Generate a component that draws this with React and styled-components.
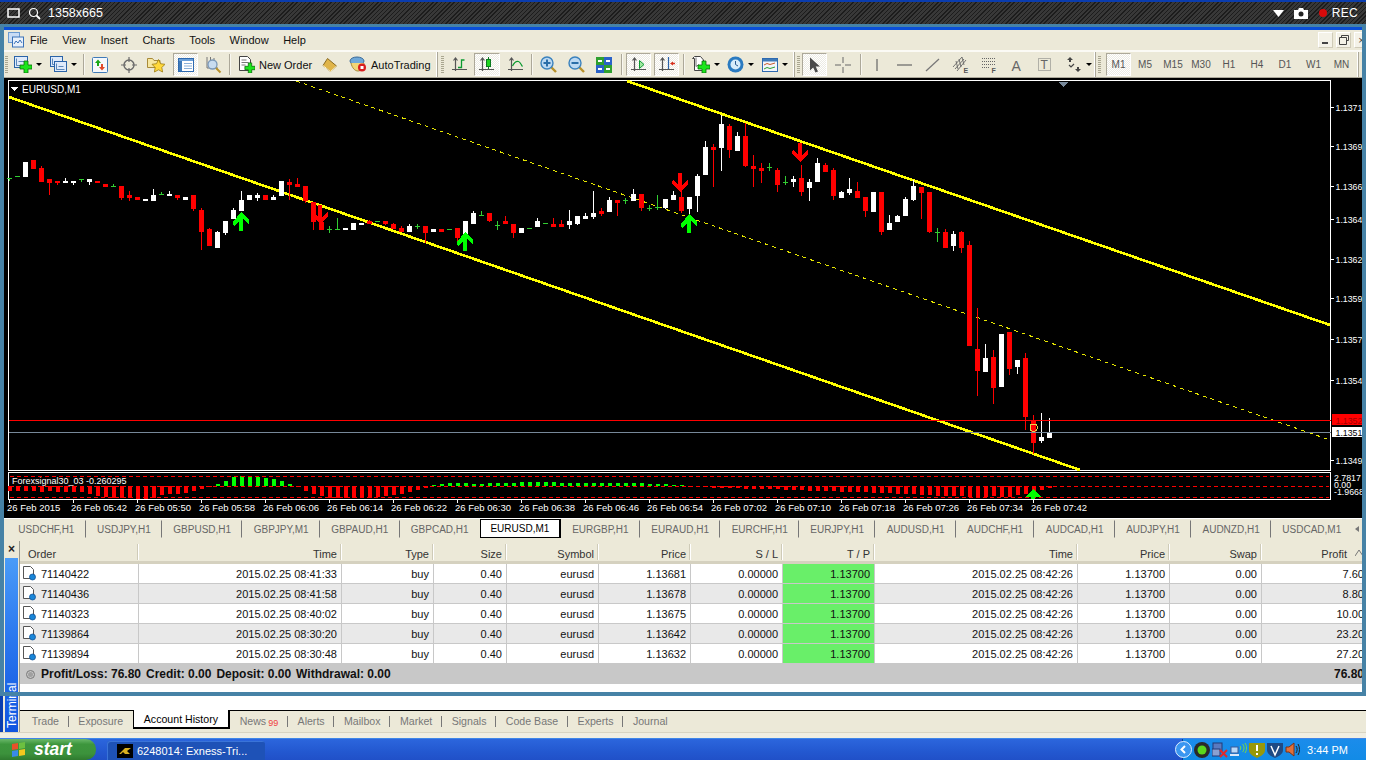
import React from 'react';
import styled, { createGlobalStyle } from 'styled-components';

const GlobalStyle = createGlobalStyle`
  html, body {
    margin: 0;
    background: #fff;
    overflow: hidden;
  }
  body {
    font-family: "Liberation Sans", Arial, sans-serif;
    font-size: 11px;
  }
`;

const Page = styled.div`
  position: relative;
  width: 1366px;
  height: 760px;
  display: flex;
  flex-direction: column;
  overflow: hidden;
`;

/* recorder overlay */
const RecBar = styled.div`
  height: 22px;
  border-top: 2px solid #0a3cae;
  background: repeating-linear-gradient(135deg, #1c1c1c 0 1px, #383838 1px 3px);
  color: #fff;
  display: flex;
  align-items: center;
  gap: 0;
  padding: 0 8px 0 7px;
  font-size: 12.5px;
  flex: none;
`;

const RecGap = styled.span`
  width: ${p => p.$w}px;
`;

const RecSize = styled.span`
  margin-left: 7px;
  flex: 1;
`;

const RecLabel = styled.span`
  margin-left: 5px;
  font-size: 12px;
  letter-spacing: 0.3px;
`;

const RecFrame = styled.div`
  position: absolute;
  left: 0;
  top: 24px;
  width: 1366px;
  height: 672px;
  box-sizing: border-box;
  border: 4px solid #4682a6;
  border-top-width: 3px;
  pointer-events: none;
`;

const Desktop = styled.div`
  flex: 1;
  min-height: 0;
  display: flex;
  flex-direction: column;
  padding: 3px 0 0 4px;
  background: #ece9d8;
  box-shadow: inset 3px 0 0 #0a3fb0;
`;

const TitleStrip = styled.div`
  height: 3px;
  background: #0a4fd8;
  flex: none;
`;

const MenuBar = styled.div`
  height: 20px;
  display: flex;
  align-items: center;
  gap: 14.5px;
  padding-left: 4px;
  color: #111;
  font-size: 11px;
  border-bottom: 2px solid #fbfaf5;
  flex: none;
`;

const AppIcon = styled.span`
  display: flex;
  width: 16px;
  margin-right: -8.5px;
`;

const WinButtons = styled.div`
  margin-left: auto;
  display: flex;
  gap: 3px;
  margin-right: -3px;
`;

const WinButton = styled.span`
  width: 15px;
  height: 16px;
  box-sizing: border-box;
  display: flex;
  align-items: center;
  justify-content: center;
  background: #f4f2e8;
  border: 1px solid #fff;
  border-right-color: #cfcbb8;
  border-bottom-color: #cfcbb8;
  color: #444;
`;

const Toolbar = styled.div`
  height: 25px;
  display: flex;
  align-items: center;
  border-bottom: 1px solid #aca899;
  box-sizing: content-box;
  flex: none;
`;

const Tool = styled.div`
  flex: none;
  margin-left: ${p => p.$ml}px;
  width: ${p => p.$w}px;
  height: ${p => (p.$pressed ? 23 : 18)}px;
  box-sizing: border-box;
  display: flex;
  align-items: center;
  justify-content: ${p => (p.$label ? 'flex-start' : 'center')};
  gap: ${p => (p.$label ? 4 : 2)}px;
  color: #111;
  white-space: nowrap;
  ${p =>
    p.$pressed &&
    `
    background: repeating-conic-gradient(#ffffff 0 25%, #ecebe3 0 50%) 0 0 / 2px 2px;
    border: 1px solid;
    border-color: #aca899 #fff #fff #aca899;
  `}
`;

const Caret = styled.span`
  width: 0;
  height: 0;
  margin-left: 2px;
  border-left: 3px solid transparent;
  border-right: 3px solid transparent;
  border-top: 3px solid #000;
`;

const Separator = styled.span`
  flex: none;
  margin-left: ${p => p.$ml}px;
  width: 1px;
  height: 21px;
  background: #aca899;
  box-shadow: 1px 0 0 #f8f7f0;
  margin-right: 1px;
`;

const BarEnd = styled.span`
  flex: none;
  margin-left: ${p => p.$ml}px;
  width: 2px;
  height: 25px;
  border-left: 1px solid #fff;
  border-right: 1px solid #aca899;
  box-sizing: border-box;
`;

const Grip = styled.span`
  flex: none;
  margin-left: ${p => p.$ml}px;
  width: 3px;
  height: 17px;
  background: repeating-linear-gradient(180deg, #a9a690 0 1px, transparent 1px 2px);
`;

const Period = styled.div`
  flex: none;
  width: ${p => p.$w}px;
  height: ${p => (p.$pressed ? 23 : 18)}px;
  margin-left: ${p => p.$ml || 0}px;
  box-sizing: border-box;
  display: flex;
  align-items: center;
  justify-content: center;
  font-size: 10px;
  color: #555;
  ${p =>
    p.$pressed &&
    `
    background: repeating-conic-gradient(#ffffff 0 25%, #ecebe3 0 50%) 0 0 / 2px 2px;
    border: 1px solid;
    border-color: #aca899 #fff #fff #aca899;
  `}
`;

const ChartSvg = styled.svg`
  display: block;
  flex: none;
  width: 1358px;
  height: 440px;
  background: #000;
`;

const SymbolBar = styled.div`
  height: 23px;
  display: flex;
  align-items: flex-start;
  padding: 1px 0 0 3px;
  box-sizing: border-box;
  border-top: 1px solid #fff;
  flex: none;
`;

const SymbolTab = styled.div`
  padding: 0 ${p => (p.$active ? 9.5 : 10.3)}px;
  display: flex;
  align-items: center;
  font-size: 10px;
  white-space: nowrap;
  box-sizing: border-box;
  color: ${p => (p.$active ? '#000' : '#666')};
  background: ${p => (p.$active ? '#fff' : 'transparent')};
  border-left: 1px solid ${p => (p.$active ? '#000' : 'transparent')};
  border-top: 1px solid ${p => (p.$active ? '#000' : 'transparent')};
  border-right: ${p => (p.$active ? '2px solid #000' : p.$sep ? '1px solid #777' : '1px solid transparent')};
  border-bottom: 1px solid ${p => (p.$active ? '#000' : 'transparent')};
  margin-top: ${p => (p.$active ? -1 : 0)}px;
  height: ${p => (p.$active ? 19 : 18)}px;
`;

const ScrollArrow = styled.span`
  margin-left: 2px;
  margin-top: 6px;
  width: 0;
  height: 0;
  border-top: 3px solid transparent;
  border-bottom: 3px solid transparent;
  border-right: 4px solid #777;
`;

const Terminal = styled.div`
  flex: 1;
  min-height: 0;
  display: flex;
`;

const SideBar = styled.div`
  width: 15px;
  flex: none;
  display: flex;
  flex-direction: column;
`;

const SideClose = styled.div`
  height: 16px;
  padding-top: 1px;
  display: flex;
  justify-content: center;
  font-size: 12px;
  font-weight: bold;
  color: #222;
  line-height: 14px;
`;

const SideTitle = styled.div`
  flex: 1;
  margin-left: 1px;
  width: 13px;
  background: linear-gradient(0deg, #4a9cf8 0%, #2f7cf0 40%, #0f55e0 100%);
  color: #fff;
  display: flex;
  align-items: center;
  justify-content: flex-start;
  writing-mode: vertical-rl;
  transform: rotate(180deg);
  font-size: 12px;
  padding-top: 4px;
  box-sizing: border-box;
`;

const TerminalMain = styled.div`
  flex: 1;
  min-width: 0;
  display: flex;
  flex-direction: column;
  padding-top: 2px;
  border-left: 1px solid #9a9a90;
`;

const columns = '119px 203px 92px 73px 92px 92px 92px 92px 203px 92px 92px 1fr';

const HeadRow = styled.div`
  display: grid;
  grid-template-columns: ${columns};
  height: 18px;
  border-bottom: 3px solid #d5d1bf;
  box-sizing: content-box;
  background: #ece9d8;
  color: #333;
  flex: none;
`;

const HeadCell = styled.div`
  position: relative;
  display: flex;
  align-items: center;
  justify-content: ${p => (p.$left ? 'flex-start' : 'flex-end')};
  padding: ${p => (p.$left ? '3px 0 0 8px' : p.$end ? '3px 19px 0 0' : '3px 4px 0 0')};
  border-right: ${p => (p.$end ? 0 : '1px solid #fff')};
  box-shadow: ${p => (p.$end ? 'none' : 'inset -1px 0 0 #cfcbb8')};
  margin: 1px 0;
`;

const SortMark = styled.svg`
  position: absolute;
  right: 3px;
  top: 5px;
  width: 8px;
  height: 8px;
`;

const DataRow = styled.div`
  display: grid;
  grid-template-columns: ${columns};
  height: 20px;
  box-sizing: border-box;
  border-bottom: 1px solid #c8c8c8;
  background: ${p => (p.$odd ? '#e9e9e9' : '#fff')};
  color: #111;
  flex: none;
`;

const DataCell = styled.div`
  display: flex;
  align-items: center;
  justify-content: flex-end;
  padding-right: ${p => (p.$end ? 2 : 4)}px;
  border-right: ${p => (p.$end ? 0 : '1px solid #c8c8c8')};
  white-space: nowrap;
  background: ${p => (p.$hit ? '#69ef69' : 'transparent')};
`;

const OrderCell = styled(DataCell)`
  justify-content: flex-start;
  padding-left: 3px;
  gap: 5px;
`;

const TotalRow = styled.div`
  height: 20px;
  background: #c8c8c8;
  display: flex;
  align-items: center;
  padding: 0 2px 0 6px;
  font-weight: bold;
  font-size: 12px;
  color: #111;
  flex: none;
`;

const TotalDot = styled.span`
  width: 7px;
  height: 7px;
  border-radius: 50%;
  background: #a0a0a0;
  border: 1px solid #808080;
  box-shadow: inset 0 0 0 1px #c8c8c8;
  margin-right: 6px;
`;

const TotalItem = styled.span`
  margin-right: 5px;
`;

const TotalSum = styled.span`
  margin-left: auto;
`;

const TermFiller = styled.div`
  flex: 1;
  background: #fff;
`;

const TermTabs = styled.div`
  height: 22px;
  flex: none;
  display: flex;
  align-items: flex-start;
  border-top: 1px solid #000;
  box-sizing: border-box;
  padding-left: 1px;
`;

const TermTab = styled.div`
  position: relative;
  height: ${p => (p.$active ? 16 : 20)}px;
  padding: 0 ${p => (p.$active ? 10 : 9.7)}px;
  margin-left: ${p => (p.$first ? 1 : 0)}px;
  display: flex;
  align-items: center;
  gap: 2px;
  white-space: nowrap;
  color: ${p => (p.$active ? '#000' : '#777')};
  background: ${p => (p.$active ? '#fff' : 'transparent')};
  font-size: 10.6px;
  box-sizing: content-box;
  ${p =>
    p.$active
      ? `border-left: 1px solid #000; border-right: 2px solid #000; border-bottom: 2px solid #000; margin-top: -1px; padding-top: 1px;`
      : p.$sep
        ? `&::after { content: ''; position: absolute; right: 0; top: 5px; height: 11px; width: 1px; background: #777; }`
        : ''}
`;

const NewsCount = styled.span`
  color: #f04040;
  font-size: 9px;
  margin-top: 3px;
`;

const BottomStrip = styled.div`
  height: 5px;
  flex: none;
  border-top: 1px solid #d8d4c2;
  background: #f0eee2;
  margin-left: -4px;
`;

const Taskbar = styled.div`
  height: 22px;
  flex: none;
  display: flex;
  align-items: flex-end;
  background: linear-gradient(180deg, #2c66dd 0%, #2358d0 60%, #2050c8 100%);
  border-top: 1px solid #3f86e8;
  box-sizing: border-box;
`;

const StartButton = styled.div`
  width: 96px;
  height: 21px;
  display: flex;
  align-items: center;
  padding-left: 11px;
  gap: 7px;
  box-sizing: border-box;
  border-radius: 0 10px 10px 0;
  background: linear-gradient(180deg, #6ab86a 0%, #3d963d 25%, #3c923c 70%, #2f7a2f 100%);
  color: #fff;
  font-style: italic;
  font-weight: bold;
  font-size: 17.5px;
`;

const TaskButton = styled.div`
  margin-left: 11px;
  width: 158px;
  height: 19px;
  display: flex;
  align-items: center;
  padding-left: 10px;
  gap: 4px;
  box-sizing: border-box;
  border-radius: 3px 3px 0 0;
  background: #1e52b7;
  box-shadow: inset 1px 1px 0 #3a74d8;
  color: #fff;
  font-size: 11px;
  white-space: nowrap;
`;

const Tray = styled.div`
  margin-left: auto;
  height: 21px;
  width: 183px;
  display: flex;
  align-items: center;
  background: linear-gradient(180deg, #1b8ceb 0%, #128be6 100%);
  border-left: 1px solid #0a3d94;
  color: #fff;
  font-size: 11px;
`;

const TrayIcons = styled.div`
  display: flex;
  align-items: center;
  gap: 2px;
  margin-left: -8px;
`;

const Clock = styled.span`
  margin-left: auto;
  margin-right: 18px;
`;

/* icons */
const Svg = ({ w = 16, h = 16, children }) => (
  <svg width={w} height={h} viewBox={`0 0 ${w} ${h}`} style={{ flex: 'none', display: 'block' }}>
    {children}
  </svg>
);

const GreenPlus = ({ x, y, s = 4 }) => (
  <path
    d={`M${x - s / 2} ${y - s * 1.5}h${s}v${s}h${s}v${s}h${-s}v${s}h${-s}v${-s}h${-s}v${-s}h${s}z`}
    fill="#1be61b"
    stroke="#0a6a0a"
    strokeWidth="0.8"
  />
);

const Axes = ({ c = '#555' }) => <path d="M3.5 1v13M0 12.5h15M1.5 3.5l2-2.5 2 2.5" fill="none" stroke={c} strokeWidth="1.2" />;

const ChartDoc = ({ x = 0.5, y = 0.5, w = 13, h = 11, fill = '#dfeafa' }) => (
  <g>
    <rect x={x} y={y} width={w} height={h} fill={fill} stroke="#2a63a8" />
    <path d={`M${x + 2} ${y + 2}v${h - 4}h${w - 4}M${x + 4} ${y + 5}h${w - 7}`} fill="none" stroke="#3a6ea8" strokeWidth="0.8" />
  </g>
);

const Glass = ({ minus }) => (
  <Svg w={17} h={17}>
    <path d="M11 11l5 5" stroke="#b8912a" strokeWidth="2.4" />
    <circle cx="7" cy="7" r="6" fill="#bcd9f2" stroke="#3b82bd" strokeWidth="1.4" />
    <path d={minus ? 'M3.5 7h7' : 'M3.5 7h7M7 3.5v7'} stroke="#2a6ea8" strokeWidth="2" />
  </Svg>
);

const icons = {
  chartAdd: (
    <Svg w={18} h={17}>
      <ChartDoc />
      <GreenPlus x={12} y={11} s={4} />
    </Svg>
  ),
  profiles: (
    <Svg w={17} h={17}>
      <ChartDoc x={0.5} y={0.5} w={12} h={10} />
      <ChartDoc x={4.5} y={5.5} w={12} h={10} />
    </Svg>
  ),
  market: (
    <Svg>
      <rect x="0.5" y="0.5" width="15" height="15" rx="1" fill="#f5f8fc" stroke="#3f7ab8" />
      <path d="M6 2.5l3 3.5H7v3H5V6H3z" fill="#1aa81a" />
      <path d="M10 13.5L7 10h2V7h2v3h2z" fill="#e04a2a" />
    </Svg>
  ),
  target: (
    <Svg>
      <circle cx="8" cy="8" r="5" fill="none" stroke="#6a6a6a" strokeWidth="1.4" />
      <path d="M8 0v5M8 11v5M0 8h5M11 8h5" stroke="#6a6a6a" strokeWidth="1.2" />
    </Svg>
  ),
  folderStar: (
    <Svg w={18} h={17}>
      <path d="M0.5 2.5h5l1.500 2h6v7h-12.500z" fill="#f7e7a0" stroke="#a88a38" />
      <path d="M11.500 3.500l2 4.200 4.500.6-3.200 3.200.8 4.500-4.100-2.200-4.100 2.200.8-4.500L5 8.300l4.500-.6z" fill="#ffd83a" stroke="#9a7a10" strokeWidth="0.8" />
    </Svg>
  ),
  terminal: (
    <Svg>
      <rect x="0.500" y="1.500" width="15" height="13" fill="#fff" stroke="#2f6ab0" />
      <rect x="1" y="2" width="14" height="2" fill="#6a9fd8" />
      <rect x="1" y="4" width="3" height="10" fill="#3f7ab8" />
      <path d="M6 6.500h8M6 9h8M6 11.500h8" stroke="#8ab0d8" />
    </Svg>
  ),
  tester: (
    <Svg w={18} h={18}>
      <path d="M3 1v11h11M6.500 1v8M10 2v6" stroke="#777" fill="none" />
      <path d="M11.500 11.500l5 5" stroke="#b8912a" strokeWidth="2" />
      <circle cx="8.500" cy="8.500" r="4.500" fill="#c8dcf0" stroke="#7a98b8" strokeWidth="1.300" />
    </Svg>
  ),
  newOrder: (
    <Svg w={16} h={17}>
      <path d="M0.500 0.500h8l3 3v11h-11z" fill="#fff" stroke="#444" />
      <path d="M2.500 4h5M2.500 6.500h7M2.500 9h4" stroke="#777" />
      <GreenPlus x={11} y={12} s={3.4} />
    </Svg>
  ),
  book: (
    <Svg w={16} h={16}>
      <path d="M5.500 1.500l9 7.500-6 5.500-7.500-6z" fill="#e0b54a" stroke="#8a6a20" />
      <path d="M1 8.500l7.500 6 6-5.500" fill="none" stroke="#fff2c0" />
    </Svg>
  ),
  auto: (
    <Svg w={18} h={17}>
      <ellipse cx="8" cy="5" rx="7" ry="4" fill="#6fa8d8" stroke="#3a6a98" />
      <path d="M2 7c1 5 4 8 7 8s5-3 6-8" fill="#f2d676" stroke="#a88a38" />
      <circle cx="13" cy="11.500" r="4" fill="#d81e1e" />
      <rect x="11.500" y="10" width="3" height="3" fill="#fff" />
    </Svg>
  ),
  bars: (
    <Svg>
      <Axes />
      <path d="M6 10.500h3.500V3h3" fill="none" stroke="#0b9a30" strokeWidth="1.300" />
    </Svg>
  ),
  candles: (
    <Svg>
      <Axes />
      <path d="M9.500 0v12" stroke="#0b7a20" />
      <rect x="7.500" y="2.500" width="4" height="7" fill="#1fd41f" stroke="#0b7a20" />
    </Svg>
  ),
  line: (
    <Svg>
      <Axes />
      <path d="M4.500 9c2-4 4-5 6-4.500s2.500 3.500 4 5" fill="none" stroke="#0b9a30" strokeWidth="1.200" />
    </Svg>
  ),
  zoomIn: <Glass />,
  zoomOut: <Glass minus />,
  tile: (
    <Svg>
      <rect width="8" height="8" fill="#2fa02f" />
      <rect x="8" width="8" height="8" fill="#2a62c8" />
      <rect y="8" width="8" height="8" fill="#2a62c8" />
      <rect x="8" y="8" width="8" height="8" fill="#2fa02f" />
      <path d="M2 4h4M10 4h4M2 12h4M10 12h4" stroke="#fff" strokeWidth="2" />
    </Svg>
  ),
  shift: (
    <Svg>
      <Axes />
      <path d="M8.500 3.500l4.500 4-4.500 4z" fill="#9fe89f" stroke="#0b9a30" />
    </Svg>
  ),
  mark: (
    <Svg>
      <Axes />
      <path d="M9.500 0v12" stroke="#2a62a8" strokeWidth="1.200" />
      <path d="M11 6.500l3-2v1.300h2v1.400h-2v1.300z" fill="#d8301e" />
    </Svg>
  ),
  template: (
    <Svg w={18} h={17}>
      <path d="M0.500 2.500h2v12h9V4l-3-3.500h-6z" fill="#fff" stroke="#444" />
      <path d="M4 1.500v9l3-2" fill="none" stroke="#777" />
      <GreenPlus x={12} y={11} s={4} />
    </Svg>
  ),
  clock: (
    <Svg w={17} h={17}>
      <circle cx="8.500" cy="8.500" r="8" fill="#2a7ac0" />
      <circle cx="8.500" cy="8.500" r="5" fill="#d8ecfa" />
      <path d="M8.500 5v3.500l2.500 1.500" fill="none" stroke="#2a5a90" />
    </Svg>
  ),
  indicators: (
    <Svg>
      <rect x="0.500" y="1.500" width="15" height="13" fill="#f2f5fb" stroke="#2f6ab0" />
      <rect x="1" y="2" width="14" height="2.500" fill="#3f7ab8" />
      <path d="M2 8l3-1.500 3 1 5-1.500" fill="none" stroke="#c85a2a" />
      <path d="M2 12l3-1.500 3 1 5-1.500" fill="none" stroke="#2fa02f" />
    </Svg>
  ),
  cursor: (
    <Svg w={12} h={16}>
      <path d="M1 0.500v13l3.200-3 2.300 5 2.500-1-2.300-5H11z" fill="#4a4a4a" />
    </Svg>
  ),
  cross: (
    <Svg>
      <path d="M8 0v6M8 10v6M0 8h6M10 8h6" stroke="#666" />
    </Svg>
  ),
  vline: (
    <Svg>
      <path d="M8 2v12" stroke="#666" strokeWidth="1.200" />
    </Svg>
  ),
  hline: (
    <Svg>
      <path d="M0 8h15" stroke="#666" strokeWidth="1.200" />
    </Svg>
  ),
  trend: (
    <Svg>
      <path d="M1 14L14 2" stroke="#777" strokeWidth="1.200" />
    </Svg>
  ),
  channel: (
    <Svg w={18} h={17}>
      <path d="M1 11L10 1M3 13L12 3M5 15L14 4M4 5l2 8M7 3l2 8M10 1l2 8" stroke="#666" strokeWidth="0.9" fill="none" />
      <text x="11.500" y="16.500" fontSize="7" fontFamily="Liberation Sans" fontWeight="bold" fill="#555">E</text>
    </Svg>
  ),
  fib: (
    <Svg w={16} h={17}>
      <path d="M1 2.500h13M1 5.500h13M1 8.500h13M1 11.500h8" stroke="#666" strokeDasharray="1 1" />
      <text x="10.500" y="16.500" fontSize="7" fontFamily="Liberation Sans" fontWeight="bold" fill="#555">F</text>
    </Svg>
  ),
  letterA: (
    <Svg>
      <text x="2.500" y="13.500" fontSize="14" fontFamily="Liberation Sans" fill="#666">A</text>
    </Svg>
  ),
  letterT: (
    <Svg>
      <rect x="1.500" y="1.500" width="12" height="12" fill="none" stroke="#777" strokeDasharray="1 1" />
      <text x="3.500" y="12" fontSize="12" fontFamily="Liberation Sans" fill="#666">T</text>
    </Svg>
  ),
  arrows: (
    <Svg w={16} h={16}>
      <path d="M4 0l3 3H5v2H3V3H1zM12 15l-3-3h2v-2h2v2h2z" fill="#444" />
      <path d="M3 8l2 2 3-3" fill="none" stroke="#444" strokeWidth="1.200" />
    </Svg>
  ),
};

const tools = [
  { grip: true, at: 5 },
  { at: 15, w: 26, icon: 'chartAdd', caret: true },
  { at: 50, w: 26, icon: 'profiles', caret: true },
  { sep: true, at: 83 },
  { at: 92, w: 16, icon: 'market' },
  { at: 121, w: 16, icon: 'target' },
  { at: 147, w: 18, icon: 'folderStar' },
  { at: 173, w: 25, icon: 'terminal', pressed: true },
  { at: 204, w: 18, icon: 'tester' },
  { sep: true, at: 229 },
  { at: 239, w: 73, icon: 'newOrder', label: 'New Order' },
  { at: 322, w: 16, icon: 'book' },
  { at: 349, w: 82, icon: 'auto', label: 'AutoTrading' },
  { end: true, at: 436 },
  { grip: true, at: 441 },
  { at: 452, w: 15, icon: 'bars' },
  { at: 474, w: 26, icon: 'candles', pressed: true },
  { at: 508, w: 15, icon: 'line' },
  { sep: true, at: 531 },
  { at: 540, w: 17, icon: 'zoomIn' },
  { at: 568, w: 17, icon: 'zoomOut' },
  { at: 596, w: 16, icon: 'tile' },
  { sep: true, at: 621 },
  { at: 626, w: 25, icon: 'shift', pressed: true },
  { at: 654, w: 25, icon: 'mark', pressed: true },
  { sep: true, at: 683 },
  { at: 693, w: 26, icon: 'template', caret: true },
  { at: 727, w: 26, icon: 'clock', caret: true },
  { at: 762, w: 26, icon: 'indicators', caret: true },
  { end: true, at: 793 },
  { grip: true, at: 797 },
  { at: 802, w: 25, icon: 'cursor', pressed: true },
  { at: 835, w: 16, icon: 'cross' },
  { sep: true, at: 860 },
  { at: 869, w: 16, icon: 'vline' },
  { at: 897, w: 15, icon: 'hline' },
  { at: 925, w: 16, icon: 'trend' },
  { at: 952, w: 18, icon: 'channel' },
  { at: 981, w: 16, icon: 'fib' },
  { at: 1009, w: 16, icon: 'letterA' },
  { at: 1037, w: 16, icon: 'letterT' },
  { at: 1066, w: 25, icon: 'arrows', caret: true },
  { end: true, at: 1094 },
  { grip: true, at: 1098 },
];

const periods = [
  ['M1', 25, 5],
  ['M5', 28],
  ['M15', 28],
  ['M30', 28],
  ['H1', 28],
  ['H4', 28],
  ['D1', 28],
  ['W1', 29],
  ['MN', 27],
];

function ToolbarItems() {
  let cursor = 4;
  return tools.map(tool => {
    const ml = tool.at - cursor;
    if (tool.grip) {
      cursor = tool.at + 3;
      return <Grip key={tool.at} $ml={ml} />;
    }
    if (tool.sep) {
      cursor = tool.at + 2;
      return <Separator key={tool.at} $ml={ml} />;
    }
    if (tool.end) {
      cursor = tool.at + 2;
      return <BarEnd key={tool.at} $ml={ml} />;
    }
    cursor = tool.at + tool.w;
    return (
      <Tool key={tool.at} $ml={ml} $w={tool.w} $pressed={tool.pressed} $label={tool.label}>
        {icons[tool.icon]}
        {tool.caret && <Caret />}
        {tool.label}
      </Tool>
    );
  });
}

/* candles: [kind, bodyTop, bodyBottom, wickTop, wickBottom], x = 9.5 + 8 * index */
const candles = [
  ['g', 178, 178, 178, 181], ['g', 176, 176, 176, 176], ['w', 162, 177, 162, 177], ['r', 160, 169, 160, 169],
  ['r', 168, 182, 166, 182], ['r', 179, 183, 179, 195], ['r', 181, 183, 181, 185], ['w', 181, 183, 178, 183],
  ['w', 181, 183, 181, 185], ['g', 179, 179, 179, 182], ['w', 179, 182, 179, 185], ['r', 181, 183, 181, 183],
  ['r', 184, 187, 184, 187], ['g', 186, 186, 184, 186], ['r', 186, 198, 186, 200], ['r', 195, 198, 191, 201],
  ['r', 197, 200, 197, 200], ['w', 199, 201, 199, 201], ['w', 195, 201, 189, 201], ['g', 194, 194, 192, 194],
  ['w', 194, 196, 191, 196], ['r', 195, 198, 195, 200], ['w', 197, 200, 197, 200], ['r', 195, 209, 195, 211],
  ['r', 210, 232, 208, 250], ['r', 229, 246, 228, 246], ['w', 232, 248, 231, 248], ['w', 221, 233, 221, 235],
  ['w', 210, 219, 208, 219], ['w', 200, 211, 191, 211], ['w', 195, 200, 195, 200], ['w', 195, 198, 193, 201],
  ['r', 195, 200, 195, 200], ['w', 197, 200, 195, 200], ['w', 181, 196, 181, 196], ['r', 182, 185, 179, 200],
  ['r', 184, 187, 178, 187], ['r', 186, 201, 186, 203], ['r', 202, 222, 202, 230], ['r', 222, 230, 207, 230],
  ['g', 229, 229, 226, 233], ['g', 229, 229, 218, 229], ['w', 228, 230, 228, 230], ['w', 223, 230, 223, 230],
  ['w', 223, 225, 223, 225], ['r', 221, 224, 220, 224], ['g', 221, 221, 221, 221], ['r', 221, 224, 221, 225],
  ['r', 224, 229, 223, 229], ['r', 228, 232, 226, 232], ['w', 226, 232, 224, 232], ['g', 226, 226, 224, 229],
  ['r', 226, 233, 226, 243], ['w', 229, 232, 229, 232], ['r', 229, 232, 229, 232], ['g', 229, 229, 229, 229],
  ['r', 228, 238, 228, 244], ['w', 221, 237, 221, 237], ['w', 213, 224, 211, 224], ['g', 215, 215, 211, 215],
  ['r', 213, 221, 213, 222], ['g', 225, 225, 221, 230], ['r', 221, 224, 216, 224], ['r', 224, 233, 224, 238],
  ['w', 228, 233, 228, 233], ['g', 228, 228, 228, 228], ['w', 221, 227, 218, 227], ['g', 223, 223, 223, 223],
  ['r', 224, 227, 218, 227], ['r', 224, 227, 220, 227], ['w', 221, 225, 210, 229], ['w', 216, 224, 216, 225],
  ['w', 216, 219, 213, 219], ['w', 213, 217, 191, 219], ['r', 211, 214, 208, 216], ['w', 200, 212, 197, 212],
  ['r', 200, 203, 200, 216], ['g', 200, 200, 198, 204], ['w', 194, 201, 189, 201], ['r', 194, 208, 194, 211],
  ['g', 208, 208, 205, 211], ['g', 207, 207, 195, 210], ['w', 199, 208, 199, 209], ['w', 195, 200, 191, 200],
  ['r', 197, 211, 190, 213], ['w', 197, 209, 197, 215], ['w', 176, 196, 174, 212], ['w', 147, 175, 141, 175],
  ['r', 147, 150, 144, 187], ['w', 124, 148, 115, 171], ['r', 126, 150, 124, 158], ['w', 136, 151, 132, 151],
  ['r', 136, 166, 123, 167], ['r', 166, 169, 155, 187], ['r', 168, 171, 163, 183], ['g', 167, 167, 163, 171],
  ['r', 170, 185, 168, 192], ['g', 182, 182, 176, 185], ['w', 179, 182, 176, 187], ['r', 178, 192, 165, 196],
  ['w', 182, 188, 179, 201], ['w', 163, 182, 158, 182], ['r', 165, 172, 163, 172], ['r', 170, 196, 168, 200],
  ['w', 192, 198, 191, 198], ['w', 189, 193, 178, 195], ['r', 191, 198, 182, 198], ['r', 197, 211, 197, 217],
  ['w', 192, 212, 192, 212], ['r', 192, 232, 192, 235], ['w', 223, 230, 215, 230], ['w', 216, 222, 215, 222],
  ['w', 199, 216, 197, 216], ['w', 186, 200, 180, 201], ['r', 187, 193, 187, 219], ['r', 192, 232, 192, 233],
  ['g', 232, 232, 228, 242], ['r', 232, 248, 229, 248], ['w', 234, 246, 231, 251], ['r', 232, 248, 231, 253],
  ['r', 245, 346, 241, 346], ['r', 349, 371, 308, 396], ['w', 358, 372, 344, 372], ['r', 357, 388, 350, 404],
  ['w', 334, 387, 334, 387], ['r', 332, 369, 332, 375], ['w', 360, 367, 360, 374], ['r', 358, 417, 353, 430],
  ['r', 421, 443, 415, 454], ['w', 437, 441, 413, 443], ['w', 432, 438, 418, 438],
];

const histogram = [
  -5, -5, -5, -5, -6, -5, -6, -6, -6, -6, -8, -10, -11, -12, -12, -12, -13, -13, -12, -9, -8, -8, -7, -5, -3, -1,
  2, 5, 9, 10, 10, 9, 8, 7, 5, 2, -1, -5, -8, -10, -12, -12, -12, -12, -12, -12, -11, -10, -9, -8, -6, -4, -2,
  1, 2, 3, 3, 3, 2, 2, 3, 3, 3, 3, 4, 4, 4, 4, 4, 3, 3, 3, 3, 3, 3, 3, 3, 3, 3, 3, 2, 2, 2, 1, 1, -1, -1,
  -1, -2, -2, -2, -2, -3, -3, -3, -3, -3, -4, -4, -4, -5, -5, -5, -5, -6, -6, -6, -6, -7, -7, -7, -8, -8, -8,
  -9, -9, -10, -10, -10, -10, -11, -11, -11, -10, -11, -11, -9, -8, -8, -4, -2,
];

const prices = [
  ['1.1371', 107], ['1.1369', 146], ['1.1366', 186], ['1.1364', 219], ['1.1362', 259],
  ['1.1359', 298], ['1.1357', 339], ['1.1354', 380], ['1.1349', 460],
];

const times = [
  '26 Feb 2015', '26 Feb 05:42', '26 Feb 05:50', '26 Feb 05:58', '26 Feb 06:06', '26 Feb 06:14', '26 Feb 06:22',
  '26 Feb 06:30', '26 Feb 06:38', '26 Feb 06:46', '26 Feb 06:54', '26 Feb 07:02', '26 Feb 07:10', '26 Feb 07:18',
  '26 Feb 07:26', '26 Feb 07:34', '26 Feb 07:42',
];

const candleColor = { w: '#fff', r: '#ff0000', g: '#32cd32' };

function ArrowUp({ x, y }) {
  return <path d={`M${x} ${y}l8 8v3l-1 1-5-5v12h-4V${y + 9}l-5 5-1-1v-3z`} fill="#00ff00" />;
}

function ArrowDown({ x, y }) {
  return <path d={`M${x} ${y}l-8-8v-3l1-1 5 5V${y - 19}h4v12l5-5 1 1v3z`} fill="#ff0000" />;
}

function Chart() {
  return (
    <ChartSvg viewBox="4 78 1358 440" fontFamily='"Liberation Sans", Arial, sans-serif' fontSize="9.5" shapeRendering="crispEdges">
      <rect x="8.500" y="80.500" width="1322" height="390" fill="none" stroke="#fff" />
      <rect x="8.500" y="472.500" width="1322" height="27" fill="none" stroke="#fff" />

      <path d="M9 97L1080 470" stroke="#ffff00" strokeWidth="2.600" />
      <path d="M627 81L1330 325" stroke="#ffff00" strokeWidth="2.600" />
      <path d="M296 81L1330 440" stroke="#e6e600" strokeDasharray="4 4" />

      {candles.map(([kind, top, bottom, wickTop, wickBottom], i) => {
        const x = 9 + 8 * i;
        return (
          <g key={i} fill={candleColor[kind]}>
            <rect x={x} y={wickTop} width="1" height={Math.max(1, wickBottom - wickTop)} />
            <rect x={x - 2} y={top} width="5" height={kind === 'g' ? 1 : bottom - top} />
          </g>
        );
      })}

      <rect x="9" y="420" width="1322" height="1" fill="#ff0000" />
      <rect x="9" y="432" width="1322" height="1" fill="#778899" />
      <rect x="1030" y="424" width="7" height="7" rx="2" fill="none" stroke="#e6d44a" />

      <ArrowUp x={241} y={212} />
      <ArrowUp x={465} y={232} />
      <ArrowUp x={689} y={214} />
      <ArrowDown x={320} y={224} />
      <ArrowDown x={680} y={192} />
      <ArrowDown x={800} y={162} />

      <path d="M1058 82h10l-5 5z" fill="#778899" />
      <path d="M11 87h7l-3.500 4z" fill="#fff" />
      <text x="22" y="92.500" fill="#fff" fontSize="10">EURUSD,M1</text>

      {prices.map(([label, y]) => (
        <g key={label}>
          <path d={`M1331 ${y}h3`} stroke="#fff" />
          <text x="1335.500" y={y + 3.500} fill="#fff" fontSize="8.800">{label}</text>
        </g>
      ))}
      <rect x="1332" y="414" width="30" height="11" fill="#ff0000" />
      <text x="1335.500" y="423.500" fill="#a00000" fontSize="8.800">1.1352</text>
      <rect x="1332" y="427" width="30" height="10" fill="#fff" />
      <text x="1335.500" y="435.500" fill="#000" fontSize="8.800">1.1351</text>

      {histogram.map((value, i) => (
        <rect
          key={i}
          x={8 + 8 * i}
          y={value < 0 ? 486 : 486 - value}
          width="4"
          height={Math.abs(value)}
          fill={value < 0 ? '#ff0000' : '#00ff00'}
        />
      ))}
      <path d="M10 476H1329M10 486.500H1329M10 497.500H1329" stroke="#ff0000" strokeDasharray="4 3" />
      <path d="M1033 489l8 8h-6v2h-4v-2h-6z" fill="#00ff00" />
      <text x="12" y="484" fill="#fff" fontSize="9">Forexsignal30_03 -0.260295</text>
      <text x="1334" y="481" fill="#fff" fontSize="8.800">2.7817</text>
      <text x="1334" y="488" fill="#fff" fontSize="8.800">0.00</text>
      <text x="1334" y="495" fill="#fff" fontSize="8.800">-1.9668</text>

      {times.map((label, i) => (
        <g key={label}>
          <path d={`M${9.500 + 64 * i} 500v3`} stroke="#fff" />
          <text x={7 + 64 * i} y="511" fill="#fff">{label}</text>
        </g>
      ))}
    </ChartSvg>
  );
}

const symbols = [
  'USDCHF,H1', 'USDJPY,H1', 'GBPUSD,H1', 'GBPJPY,M1', 'GBPAUD,H1', 'GBPCAD,H1', 'EURUSD,M1', 'EURGBP,H1', 'EURAUD,H1',
  'EURCHF,H1', 'EURJPY,H1', 'AUDUSD,H1', 'AUDCHF,H1', 'AUDCAD,H1', 'AUDJPY,H1', 'AUDNZD,H1', 'USDCAD,M1',
];

const heads = ['Order', 'Time', 'Type', 'Size', 'Symbol', 'Price', 'S / L', 'T / P', 'Time', 'Price', 'Swap', 'Profit'];

const orders = [
  ['71140422', '2015.02.25 08:41:33', '1.13681', '7.60'],
  ['71140436', '2015.02.25 08:41:58', '1.13678', '8.80'],
  ['71140323', '2015.02.25 08:40:02', '1.13675', '10.00'],
  ['71139864', '2015.02.25 08:30:20', '1.13642', '23.20'],
  ['71139894', '2015.02.25 08:30:48', '1.13632', '27.20'],
];

const termTabs = ['Trade', 'Exposure', 'Account History', 'News', 'Alerts', 'Mailbox', 'Market', 'Signals', 'Code Base', 'Experts', 'Journal'];

function OrderIcon() {
  return (
    <Svg w={13} h={15}>
      <path d="M0.500 0.500h7l3 3v9h-10z" fill="#fff" stroke="#555" />
      <circle cx="9.500" cy="11" r="3" fill="#1a86d8" stroke="#0a4a90" strokeWidth="0.700" />
    </Svg>
  );
}

function App() {
  return (
    <Page>
      <GlobalStyle />
      <RecBar>
        <Svg w={13} h={12}>
          <rect x="1" y="2" width="11" height="8" fill="none" stroke="#fff" strokeWidth="1.500" />
        </Svg>
        <RecGap $w={8} />
        <Svg w={13} h={13}>
          <circle cx="5.500" cy="5.500" r="4" fill="none" stroke="#fff" strokeWidth="1.200" />
          <path d="M8.500 8.500l3.500 3.500" stroke="#fff" strokeWidth="1.800" />
        </Svg>
        <RecSize>1358x665</RecSize>
        <Svg w={11} h={7}>
          <path d="M0 0h11L5.500 7z" fill="#fff" />
        </Svg>
        <RecGap $w={10} />
        <Svg w={14} h={11}>
          <path d="M0 2h4l1-2h4l1 2h4v9H0z" fill="#fff" />
          <circle cx="7" cy="6" r="2.500" fill="#222" />
        </Svg>
        <RecGap $w={11} />
        <Svg w={8} h={8}>
          <circle cx="4" cy="4" r="4" fill="#d80a0a" />
        </Svg>
        <RecLabel>REC</RecLabel>
      </RecBar>

      <Desktop>
        <TitleStrip />
        <MenuBar>
          <AppIcon>
            <Svg>
              <rect x="0.500" y="0.500" width="11" height="10" fill="#c8dcf5" stroke="#6a9ad0" />
              <rect x="4.500" y="5" width="11" height="10" fill="#e8f0fa" stroke="#3a72b8" />
              <path d="M6 12l2-3 2 2 2-3 2 3" fill="none" stroke="#3a72b8" />
            </Svg>
          </AppIcon>
          <span>File</span>
          <span>View</span>
          <span>Insert</span>
          <span>Charts</span>
          <span>Tools</span>
          <span>Window</span>
          <span>Help</span>
          <WinButtons>
            <WinButton>
              <Svg w={7} h={7}>
                <path d="M0 6h6" stroke="#444" strokeWidth="2" />
              </Svg>
            </WinButton>
            <WinButton>
              <Svg w={10} h={10}>
                <path d="M2.500 2.500V.5h7v5h-2M.5 2.500h7v7h-7z" fill="none" stroke="#444" />
              </Svg>
            </WinButton>
            <WinButton>×</WinButton>
          </WinButtons>
        </MenuBar>
        <Toolbar>
          <ToolbarItems />
          {periods.map(([label, w, ml]) => (
            <Period key={label} $w={w} $ml={ml} $pressed={label === 'M1'}>
              {label}
            </Period>
          ))}
          <BarEnd $ml={2} />
        </Toolbar>
        <Chart />
        <SymbolBar>
          {symbols.map((symbol, i) => (
            <SymbolTab
              key={symbol}
              $active={symbol === 'EURUSD,M1'}
              $sep={symbol !== 'GBPCAD,H1' && i < symbols.length - 1}
            >
              {symbol}
            </SymbolTab>
          ))}
          <ScrollArrow />
        </SymbolBar>
        <Terminal>
          <SideBar>
            <SideClose>×</SideClose>
            <SideTitle>Terminal</SideTitle>
          </SideBar>
          <TerminalMain>
            <HeadRow>
              {heads.map((head, i) => (
                <HeadCell key={i} $left={i === 0} $end={i === heads.length - 1}>
                  {head}
                  {i === heads.length - 1 && (
                    <SortMark viewBox="0 0 8 8">
                      <path d="M0 7l4-6 4 6" fill="none" stroke="#777" />
                    </SortMark>
                  )}
                </HeadCell>
              ))}
            </HeadRow>
            {orders.map(([id, opened, price, profit], i) => (
              <DataRow key={id} $odd={i % 2 === 1}>
                <OrderCell>
                  <OrderIcon />
                  {id}
                </OrderCell>
                <DataCell>{opened}</DataCell>
                <DataCell>buy</DataCell>
                <DataCell>0.40</DataCell>
                <DataCell>eurusd</DataCell>
                <DataCell>{price}</DataCell>
                <DataCell>0.00000</DataCell>
                <DataCell $hit>1.13700</DataCell>
                <DataCell>2015.02.25 08:42:26</DataCell>
                <DataCell>1.13700</DataCell>
                <DataCell>0.00</DataCell>
                <DataCell $end>{profit}</DataCell>
              </DataRow>
            ))}
            <TotalRow>
              <TotalDot />
              <TotalItem>Profit/Loss: 76.80</TotalItem>
              <TotalItem>Credit: 0.00</TotalItem>
              <TotalItem>Deposit: 0.00</TotalItem>
              <TotalItem>Withdrawal: 0.00</TotalItem>
              <TotalSum>76.80</TotalSum>
            </TotalRow>
            <TermFiller />
            <TermTabs>
              {termTabs.map((tab, i) => (
                <TermTab
                  key={tab}
                  $first={i === 0}
                  $active={tab === 'Account History'}
                  $sep={i < termTabs.length - 1 && tab !== 'Exposure'}
                >
                  {tab}
                  {tab === 'News' && <NewsCount>99</NewsCount>}
                </TermTab>
              ))}
            </TermTabs>
          </TerminalMain>
        </Terminal>
        <BottomStrip />
      </Desktop>

      <Taskbar>
        <StartButton>
          <Svg w={16} h={15}>
            <path d="M1 2l6-1v6l-6 1z" fill="#e8502a" />
            <path d="M8 1l6-1v6l-6 1z" fill="#6cc040" />
            <path d="M1 9l6-1v6l-6 1z" fill="#3a8ae8" />
            <path d="M8 8l6-1v6l-6 1z" fill="#f2c81e" />
          </Svg>
          start
        </StartButton>
        <TaskButton>
          <Svg w={16} h={14}>
            <rect width="16" height="14" fill="#000" />
            <path d="M2 10l6-6h6l-4 3 3 3H8L6 8l-2 2z" fill="#d8b020" />
          </Svg>
          6248014: Exness-Tri...
        </TaskButton>
        <Tray>
          <TrayIcons>
            <Svg w={17} h={17}>
              <circle cx="8.500" cy="8.500" r="8" fill="#3a96f0" stroke="#dcecff" />
              <path d="M10 5L6.500 8.500 10 12" fill="none" stroke="#fff" strokeWidth="2" />
            </Svg>
            <Svg w={16} h={16}>
              <circle cx="8" cy="8" r="8" fill="#2a2a2a" />
              <circle cx="8" cy="8" r="4.500" fill="#5ad81e" />
            </Svg>
            <Svg w={16} h={16}>
              <rect x="1" y="1" width="9" height="8" fill="#5a7ac0" stroke="#223a78" />
              <rect x="0" y="7" width="8" height="7" fill="#8aa0d0" stroke="#223a78" />
              <path d="M8 8l7 7M15 8l-7 7" stroke="#e02a2a" strokeWidth="2" />
            </Svg>
            <Svg w={17} h={15}>
              <rect x="1" y="5" width="7" height="6" fill="#b8d8f8" stroke="#3a5a98" />
              <rect x="0" y="12" width="9" height="2" fill="#dce8f8" />
              <path d="M10 4c1 1 1 3 0 4M12.500 2c2 2 2 6 0 8M15 1c2 3 2 7 0 10" fill="none" stroke="#7ad848" />
            </Svg>
            <Svg w={16} h={16}>
              <path d="M0 1h16v7c0 4-4 6-8 8-4-2-8-4-8-8z" fill="#98980a" />
              <path d="M8 3v6M8 11v2" stroke="#fff" strokeWidth="2" />
            </Svg>
            <Svg w={16} h={16}>
              <path d="M0 1h16v7c0 4-4 6-8 8-4-2-8-4-8-8z" fill="#1e4a84" />
              <path d="M4 4l4 9 4-9" fill="none" stroke="#fff" strokeWidth="1.500" />
            </Svg>
            <Svg w={15} h={15}>
              <path d="M1 5h3l5-4v13l-5-4H1z" fill="#e0703a" stroke="#803010" />
              <path d="M11 4c1.500 2 1.500 5 0 7M13 2c2 3 2 8 0 11" fill="none" stroke="#222" />
            </Svg>
          </TrayIcons>
          <Clock>3:44 PM</Clock>
        </Tray>
      </Taskbar>

      <RecFrame />
    </Page>
  );
}

export default App;
